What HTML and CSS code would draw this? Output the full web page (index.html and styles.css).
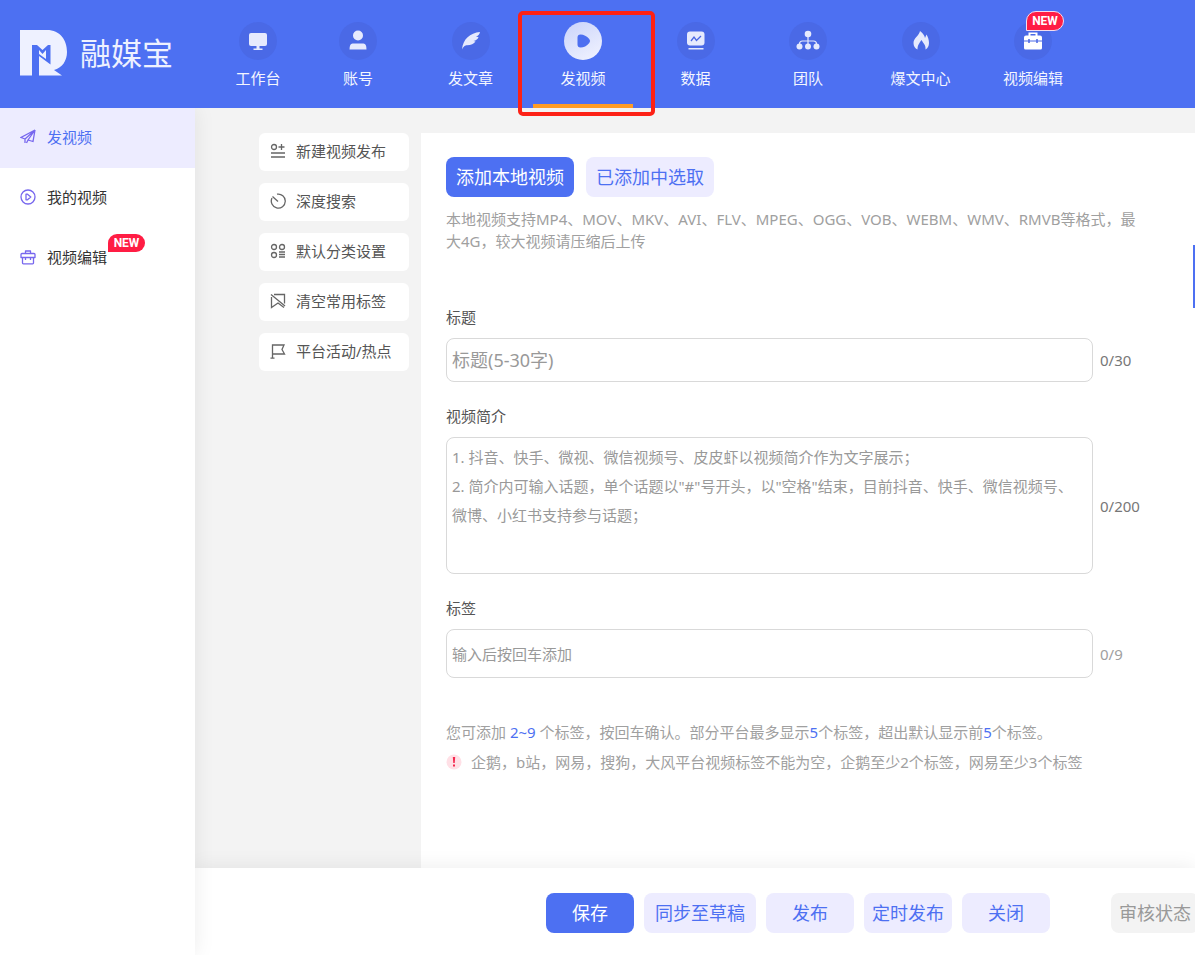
FILE: index.html
```html
<!DOCTYPE html>
<html lang="zh-CN">
<head>
<meta charset="utf-8">
<title>融媒宝 - 发视频</title>
<link rel="stylesheet" href="styles.css">
</head>
<body>
<header class="topbar">
  <a class="brand" href="#">
    <svg class="brand-mark" viewBox="0 0 48 46" aria-hidden="true"><path fill="#eef1ff" fill-rule="evenodd" d="M0 0H27C40 0 47 10 47 22C47 31 42 38 34 40L42 45.500H19V26L30.500 34.500V15H28L22.500 20L17 15H12V45.500H0ZM19 20L22.500 24L26 20V29L19 24Z"/></svg>
    <span class="brand-name">融媒宝</span>
  </a>
  <nav class="nav">
    <a class="nav-item" href="#">
      <span class="nav-icon"><svg viewBox="0 0 38 38"><rect x="10" y="11" width="18" height="13" rx="2"/><path d="M17.500 24h3v2.500h3V28h-9v-1.500h3z"/></svg></span>
      <span>工作台</span>
    </a>
    <div class="nav-group">
      <a class="nav-item" href="#">
        <span class="nav-icon"><svg viewBox="0 0 38 38"><circle cx="19" cy="13.500" r="5"/><path d="M10.500 27.500c0-4 1-6 3-6h11c2 0 3 2 3 6z"/></svg></span>
        <span>账号</span>
      </a>
      <a class="nav-item" href="#">
        <span class="nav-icon"><svg viewBox="0 0 38 38"><path d="M28 10C18 11 11 17 10 27.500C12 24 13 23.500 15 23.300C19 23 22 22 23.500 19.500L21.500 19C24 18.500 26 17 26.500 15L24 14.800C26 14 27.500 12.500 28 10Z"/></svg></span>
        <span>发文章</span>
      </a>
      <a class="nav-item active" href="#" aria-current="page">
        <span class="nav-icon"><svg viewBox="0 0 38 38"><path fill="#4d6ff0" stroke="#4d6ff0" stroke-width="6" stroke-linejoin="round" d="M16.500 15.500Q20 15.500 23 19Q20 22.500 16.500 22.500Z"/></svg></span>
        <span>发视频</span>
      </a>
      <a class="nav-item" href="#">
        <span class="nav-icon"><svg viewBox="0 0 38 38"><rect x="10" y="9.500" width="17.500" height="14" rx="3"/><path fill="none" stroke="#4966e3" stroke-width="1.300" d="M14 19l3-4 2.500 3.500L24 14"/><rect x="11.500" y="26" width="15" height="1.500"/></svg></span>
        <span>数据</span>
      </a>
      <a class="nav-item" href="#">
        <span class="nav-icon"><svg viewBox="0 0 38 38"><circle cx="19" cy="12" r="3.300"/><circle cx="10.500" cy="24.500" r="3"/><circle cx="19" cy="24.500" r="3"/><circle cx="27.500" cy="24.500" r="3"/><path fill="none" stroke="#e6eafd" stroke-width="1.200" d="M19 13v11M10.500 24v-2q0-3 3-3h11q3 0 3 3v2"/></svg></span>
        <span>团队</span>
      </a>
      <a class="nav-item" href="#">
        <span class="nav-icon"><svg viewBox="0 0 38 38"><path d="M18 9C20.500 11 22.500 13 23 16L24.500 12.500C26 15 27 18 27 21C27 24 25.500 26.500 23.500 27.500C24 23 21.500 22 19.500 18C17.500 21 15.500 23 15.500 27.500C13 26.500 11.500 24 11.500 21C11.500 16 17 14 18 9Z"/></svg></span>
        <span>爆文中心</span>
      </a>
      <a class="nav-item" href="#">
        <span class="nav-icon toolbox"><svg viewBox="0 0 38 38"><path d="M14.500 13.500v-3h9v3H26q2 0 2 2v3H10v-3q0-2 2-2zM16.500 13.500h5V12h-5zM10 19.500h18V26q0 1.500-1.500 1.500h-15Q10 27.500 10 26z"/><path stroke="#4966e3" stroke-width="1.500" d="M15 17v4M23 17v4"/></svg></span>
        <span>视频编辑</span>
        <span class="badge badge-nav">NEW</span>
      </a>
    </div>
  </nav>
</header>

<div class="body">
  <aside class="sidebar">
    <a class="side-item active" href="#">
      <svg class="icon" viewBox="0 0 16 16"><path d="M15 1L1 8.500l4 1.500M15 1l-2 11.500-5-1.500M15 1L5 10v4M15 1L8 11l-1.500 3"/></svg>
      <span>发视频</span>
    </a>
    <a class="side-item" href="#">
      <svg class="icon" viewBox="0 0 16 16"><circle cx="8" cy="8" r="7"/><path stroke-linejoin="round" d="M6 5.200v5.600h1.500L10.800 8 7.500 5.200z"/></svg>
      <span>我的视频</span>
    </a>
    <a class="side-item" href="#">
      <svg class="icon" viewBox="0 0 16 16"><path stroke-linejoin="round" d="M5.500 4V2h5v2M2 4.500h12q1 0 1 1V8.500H1V5.500q0-1 1-1zM2.500 8.500V14q0 .8.800.8h9.400q.8 0 .8-.8V8.500M5.500 8v3M10.500 8v3"/></svg>
      <span class="side-label">视频编辑<span class="badge badge-side">NEW</span></span>
    </a>
  </aside>

  <div class="workspace">
    <main class="content">
      <div class="tools">
        <button class="tool" type="button"><svg class="icon" viewBox="0 0 16 16"><circle cx="4" cy="4" r="2.500"/><path d="M8.500 4h6M11.500 1v6M1 10h14M1 14h14"/></svg>新建视频发布</button>
        <button class="tool" type="button"><svg class="icon" viewBox="0 0 16 16"><path d="M7 1.200A7 7 0 1 1 2 5M2.500 3.500L8 8.500"/></svg>深度搜索</button>
        <button class="tool" type="button"><svg class="icon" viewBox="0 0 16 16"><circle cx="4" cy="4" r="2.500"/><circle cx="12" cy="4" r="2.500"/><circle cx="4" cy="12" r="2.500"/><path d="M9 9h6M9 11.500h6M9 14h6"/></svg>默认分类设置</button>
        <button class="tool" type="button"><svg class="icon" viewBox="0 0 16 16"><path d="M4 1.500h10.500v9M1.500 4v10.500L8 10l6 4.500M1 1.500L15 13"/></svg>清空常用标签</button>
        <button class="tool" type="button"><svg class="icon" viewBox="0 0 16 16"><path d="M2.500 15.500V2H14l-2 4.500 2.500 4.500h-12M.5 15.200h4"/></svg>平台活动/热点</button>
      </div>

      <form class="panel">
        <div class="sources">
          <button class="btn btn-primary btn-source" type="button">添加本地视频</button>
          <button class="btn btn-soft btn-source" type="button">已添加中选取</button>
        </div>
        <p class="formats">本地视频支持MP4、MOV、MKV、AVI、FLV、MPEG、OGG、VOB、WEBM、WMV、RMVB等格式，最大4G，较大视频请压缩后上传</p>

        <label class="label" for="title">标题</label>
        <div class="field">
          <input class="control control-title" id="title" type="text" placeholder="标题(5-30字)">
          <span class="count">0/30</span>
        </div>

        <label class="label" for="intro">视频简介</label>
        <div class="field">
          <textarea class="control control-intro" id="intro" placeholder="1. 抖音、快手、微视、微信视频号、皮皮虾以视频简介作为文字展示；
2. 简介内可输入话题，单个话题以&quot;#&quot;号开头，以&quot;空格&quot;结束，目前抖音、快手、微信视频号、微博、小红书支持参与话题；"></textarea>
          <span class="count">0/200</span>
        </div>

        <label class="label" for="tags">标签</label>
        <div class="field">
          <input class="control control-tags" id="tags" type="text" placeholder="输入后按回车添加">
          <span class="count count-muted">0/9</span>
        </div>

        <div class="hints">
          <p>您可添加 <em>2~9</em> 个标签，按回车确认。部分平台最多显示<em>5</em>个标签，超出默认显示前<em>5</em>个标签。</p>
          <p class="warn"><svg class="warn-icon" viewBox="0 0 16 16" aria-hidden="true"><circle cx="8" cy="8" r="7.500" fill="#ffe0e6"/><path fill="#f5284e" d="M6.800 3h2.400l-.5 6H7.300zM7 10.500h2v2H7z"/></svg><span>企鹅，b站，网易，搜狗，大风平台视频标签不能为空，企鹅至少2个标签，网易至少3个标签</span></p>
        </div>
        <span class="scroll-mark"></span>
      </form>
    </main>

    <footer class="actions">
      <button class="btn btn-primary" type="button">保存</button>
      <button class="btn btn-soft btn-wide" type="button">同步至草稿</button>
      <button class="btn btn-soft" type="button">发布</button>
      <button class="btn btn-soft" type="button">定时发布</button>
      <button class="btn btn-soft" type="button">关闭</button>
      <button class="btn btn-status" type="button">审核状态</button>
    </footer>
  </div>
</div>
</body>
</html>
```

FILE: styles.css
```css
* {
  box-sizing: border-box;
}

body {
  margin: 0;
  min-height: 100vh;
  display: flex;
  flex-direction: column;
  overflow-x: hidden;
  background: #fff;
  color: #555;
  font: 15px/22px "Noto Sans", "Noto Sans CJK SC", sans-serif;
}

a {
  color: inherit;
  text-decoration: none;
}

p {
  margin: 0;
}

button,
input,
textarea {
  font: inherit;
}

/* Top navigation */
.topbar {
  position: relative;
  z-index: 2;
  display: flex;
  height: 108px;
  background: #4d70f2;
  color: #f4f6ff;
}

.brand {
  display: flex;
  align-items: center;
  gap: 12px;
  width: 208px;
  padding: 0 0 2px 20px;
}

.brand-mark {
  width: 48px;
  height: 46px;
}

.brand-name {
  color: #eef1ff;
  font-size: 31px;
  font-weight: 400;
  line-height: 40px;
}

.nav {
  display: flex;
  flex: 1;
}

.nav-group {
  display: flex;
  flex: 1;
  justify-content: space-between;
  max-width: 775px;
}

.nav-item {
  position: relative;
  display: flex;
  flex-direction: column;
  align-items: center;
  gap: 7px;
  width: 100px;
  padding-top: 22px;
}

.nav-icon {
  width: 38px;
  height: 38px;
  border-radius: 50%;
  background: #4a69e6;
}

.nav-icon svg {
  display: block;
  fill: #e6eafd;
}

.nav-icon.toolbox svg {
  fill: #fff;
}

.nav-item.active {
  border-bottom: 4px solid #ff9c24;
}

.nav-item.active .nav-icon {
  background: linear-gradient(150deg, #cad3fa, #f2f4ff);
}

.nav-item.active::after {
  content: "";
  position: absolute;
  inset: 11px -22px -12px -15px;
  border: 4px solid #fd2116;
  border-radius: 5px;
}

.badge {
  position: absolute;
  border-radius: 9px 9px 9px 0;
  background: #ff1d44;
  color: #fff;
  font-family: Roboto, sans-serif;
  font-size: 12px;
  font-weight: 700;
  line-height: 18px;
  text-align: center;
}

.badge-nav {
  top: 11px;
  left: 43px;
  width: 38px;
  border: 1px solid #f4dcee;
  border-radius: 10px 10px 10px 0;
}

.badge-side {
  top: -12px;
  left: 61px;
  width: 37px;
}

/* Side navigation */
.body {
  display: flex;
  flex: 1;
}

.sidebar {
  position: relative;
  z-index: 1;
  flex: none;
  width: 195px;
  background: #fff;
  box-shadow: 0 0 20px rgba(0, 0, 0, 0.08);
  color: #333;
}

.side-item {
  display: flex;
  align-items: center;
  gap: 11px;
  height: 60px;
  padding: 0 0 2px 20px;
}

.side-item.active {
  background: #edecff;
  color: #4d70f2;
}

.side-label {
  position: relative;
}

.icon {
  flex: none;
  width: 16px;
  height: 16px;
  fill: none;
  stroke: #666;
  stroke-width: 1.3;
}

.side-item .icon {
  stroke: #7767ee;
}

/* Workspace */
.workspace {
  display: flex;
  flex: 1;
  flex-direction: column;
  min-width: 0;
}

.content {
  display: flex;
  flex: 1;
  gap: 12px;
  padding: 25px 0 0 64px;
  background: #f3f3f3;
}

.tools {
  display: flex;
  flex: none;
  flex-direction: column;
  gap: 12px;
  width: 150px;
}

.tool {
  display: flex;
  align-items: center;
  gap: 10px;
  height: 38px;
  padding: 0 0 2px 11px;
  border: 0;
  border-radius: 6px;
  background: #fff;
  color: #555;
}

.panel {
  position: relative;
  flex: 1;
  min-width: 0;
  padding: 24px 25px;
  background: #fff;
}

.sources {
  display: flex;
  gap: 12px;
}

.btn {
  flex: none;
  width: 88px;
  height: 40px;
  padding: 0;
  border: 0;
  border-radius: 8px;
  font-size: 18px;
}

.btn-primary {
  background: #4d70f2;
  color: #fff;
}

.btn-soft {
  background: #edecff;
  color: #4d70f2;
}

.btn-source {
  width: 128px;
}

.btn-wide {
  width: 112px;
}

.formats {
  margin: 11px 0 54px;
  padding-right: 25px;
  color: #a0a0a0;
}

.label {
  display: block;
  margin-bottom: 10px;
}

.field {
  display: flex;
  align-items: center;
  gap: 7px;
  margin-bottom: 23px;
}

.control {
  flex: 1;
  min-width: 0;
  padding: 5px;
  border: 1px solid #d9d9d9;
  border-radius: 8px;
  background: #fff;
}

.control::placeholder {
  color: #999;
}

.control-title {
  height: 44px;
  font-size: 18px;
}

.control-intro {
  height: 137px;
  line-height: 29px;
  resize: none;
}

.control-tags {
  height: 49px;
}

.count {
  width: 70px;
  color: #777;
}

.count-muted {
  color: #a0a0a0;
}

.hints {
  margin-top: 39px;
  color: #a0a0a0;
  line-height: 30px;
}

.hints em {
  color: #4d70f2;
  font-style: normal;
}

.warn {
  display: flex;
  align-items: center;
  gap: 9px;
}

.warn-icon {
  flex: none;
  width: 16px;
  height: 16px;
}

.scroll-mark {
  position: absolute;
  top: 112px;
  right: 0;
  width: 2px;
  height: 63px;
  background: #4d70f2;
}

/* Bottom action bar */
.actions {
  position: relative;
  display: flex;
  gap: 10px;
  height: 87px;
  padding: 25px 0 0 351px;
  background: #fff;
  box-shadow: 0 0 20px rgba(0, 0, 0, 0.08);
}

.btn-status {
  margin: 0 -4px 0 auto;
  background: #f3f3f3;
  color: #999;
}
```
